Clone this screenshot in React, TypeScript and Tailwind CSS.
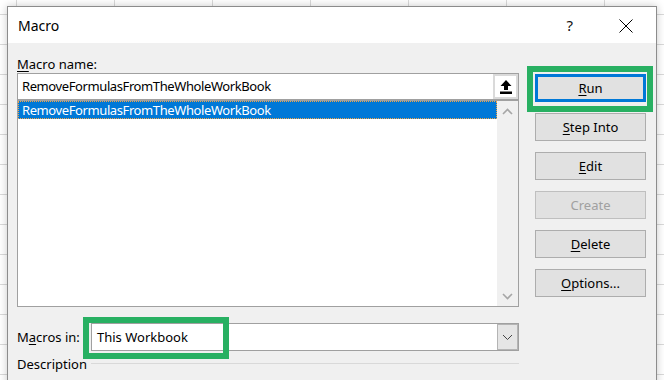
import React from "react";

function U({ c }: { c: string }) {
  return <span className="underline underline-offset-2 decoration-1">{c}</span>;
}

function Btn({
  pre = "",
  u,
  post,
  disabled = false,
  focused = false,
}: {
  pre?: string;
  u: string;
  post: string;
  disabled?: boolean;
  focused?: boolean;
}) {
  const base = "h-[28px] flex items-center justify-center bg-[#e1e1e1] pt-[2px]";
  const border = focused
    ? "border-[3px] border-[#0078d7]"
    : disabled
    ? "border border-[#bfbfbf] text-[#a0a0a0]"
    : "border border-[#adadad]";
  return (
    <div className={`${base} ${border}`}>
      <span>
        {pre}
        {disabled ? <span>{u}</span> : <U c={u} />}
        {post}
      </span>
    </div>
  );
}

function ChevronUp() {
  return (
    <svg width="11" height="7" viewBox="0 0 11 7">
      <polyline points="1,6 5.5,1.5 10,6" fill="none" stroke="#a6a6a6" strokeWidth="1.6" />
    </svg>
  );
}

function ChevronDown({ color = "#a6a6a6", w = 1.6 }: { color?: string; w?: number }) {
  return (
    <svg width="11" height="7" viewBox="0 0 11 7">
      <polyline points="1,1 5.5,5.5 10,1" fill="none" stroke={color} strokeWidth={w} />
    </svg>
  );
}

export default function App() {
  return (
    <div className="relative w-[664px] h-[380px] overflow-hidden bg-white bg-[linear-gradient(to_right,#dadada_1px,transparent_1px),linear-gradient(to_bottom,#dadada_1px,transparent_1px)] bg-size-[98px_30px] bg-position-[16px_14px] font-['Noto_Sans',sans-serif] text-[13px] text-black">
      {/* Dialog window */}
      <div className="absolute left-[7px] top-[6px] w-[650px] h-[420px] border border-[#8c8c8c] bg-[#f0f0f0] shadow-[0_0_8px_rgba(0,0,0,0.22)] flex flex-col">
        {/* Title bar */}
        <div className="h-[36px] bg-white flex items-center pl-[10px] pt-[1px] shrink-0">
          <span className="text-[14px] leading-none">Macro</span>
          <span className="ml-auto text-[15px] leading-none text-[#111]">?</span>
          <svg className="ml-[46px] mr-[23px]" width="14" height="14" viewBox="0 0 14 14">
            <line x1="0.5" y1="0.5" x2="13.5" y2="13.5" stroke="#000" strokeWidth="1" />
            <line x1="13.5" y1="0.5" x2="0.5" y2="13.5" stroke="#000" strokeWidth="1" />
          </svg>
        </div>

        {/* Body */}
        <div className="flex pl-[9px] gap-[16px]">
          {/* Left column */}
          <div className="w-[502px] flex flex-col pt-[11px]">
            <div className="h-[18px] leading-[18px] pt-[1px]">
              <U c="M" />
              acro name:
            </div>
            <div className="mt-[1px] h-[27px] border border-[#a0a0a0] bg-white flex">
              <div className="flex-1 pl-[4px] pt-[1px] flex items-center tracking-[-0.4px]">
                RemoveFormulasFromTheWholeWorkBook
              </div>
              <div className="w-[25px] border-2 border-[#dadada] bg-white flex items-center justify-center">
                <svg width="12" height="14" viewBox="0 0 12 14">
                  <polygon points="6,0 11.5,6 8,6 8,10 4,10 4,6 0.5,6" fill="#000" />
                  <rect x="0" y="11.5" width="12" height="2.5" fill="#000" />
                </svg>
              </div>
            </div>
            <div className="h-[207px] border border-[#a0a0a0] bg-white flex">
              <div className="flex-1">
                <div className="h-[18px] bg-[#0078d7] text-white border border-dotted border-[#f3a545] pl-[3px] pt-[1px] flex items-center tracking-[-0.4px]">
                  RemoveFormulasFromTheWholeWorkBook
                </div>
              </div>
              <div className="w-[21px] bg-[#f0f0f0] flex flex-col justify-between">
                <div className="h-[20px] flex items-center justify-center">
                  <ChevronUp />
                </div>
                <div className="h-[20px] flex items-center justify-center">
                  <ChevronDown />
                </div>
              </div>
            </div>

            <div className="mt-[16px] h-[28px] flex items-center">
              <div className="w-[74px] pt-[1px]">
                M<U c="a" />
                cros in:
              </div>
              <div className="flex-1 h-[28px] border border-[#a0a0a0] bg-white flex">
                <div className="flex-1 pl-[5px] pt-[1px] flex items-center">This Workbook</div>
                <div className="w-[21px] bg-[#e5e5e5] border border-[#b4b4b4] flex items-center justify-center">
                  <ChevronDown color="#444" w={1} />
                </div>
              </div>
            </div>

            <div className="mt-[3px] h-[18px] flex items-center">
              <span className="leading-[18px] pt-[1px]">Description</span>
              <div className="flex-1 h-px bg-[#d9d9d9] ml-[4px]" />
            </div>
          </div>

          {/* Right column: buttons */}
          <div className="w-[111px] pt-[31px] flex flex-col gap-[11px]">
            <Btn u="R" post="un" focused />
            <Btn u="S" post="tep Into" />
            <Btn u="E" post="dit" />
            <Btn u="C" post="reate" disabled />
            <Btn u="D" post="elete" />
            <Btn u="O" post="ptions..." />
          </div>
        </div>
      </div>

      {/* Green annotation boxes */}
      <div className="absolute left-[527px] top-[66px] w-[126px] h-[46px] border-[6px] border-[#28b062]" />
      <div className="absolute left-[83px] top-[317px] w-[146px] h-[42px] border-[6px] border-[#28b062]" />
    </div>
  );
}
